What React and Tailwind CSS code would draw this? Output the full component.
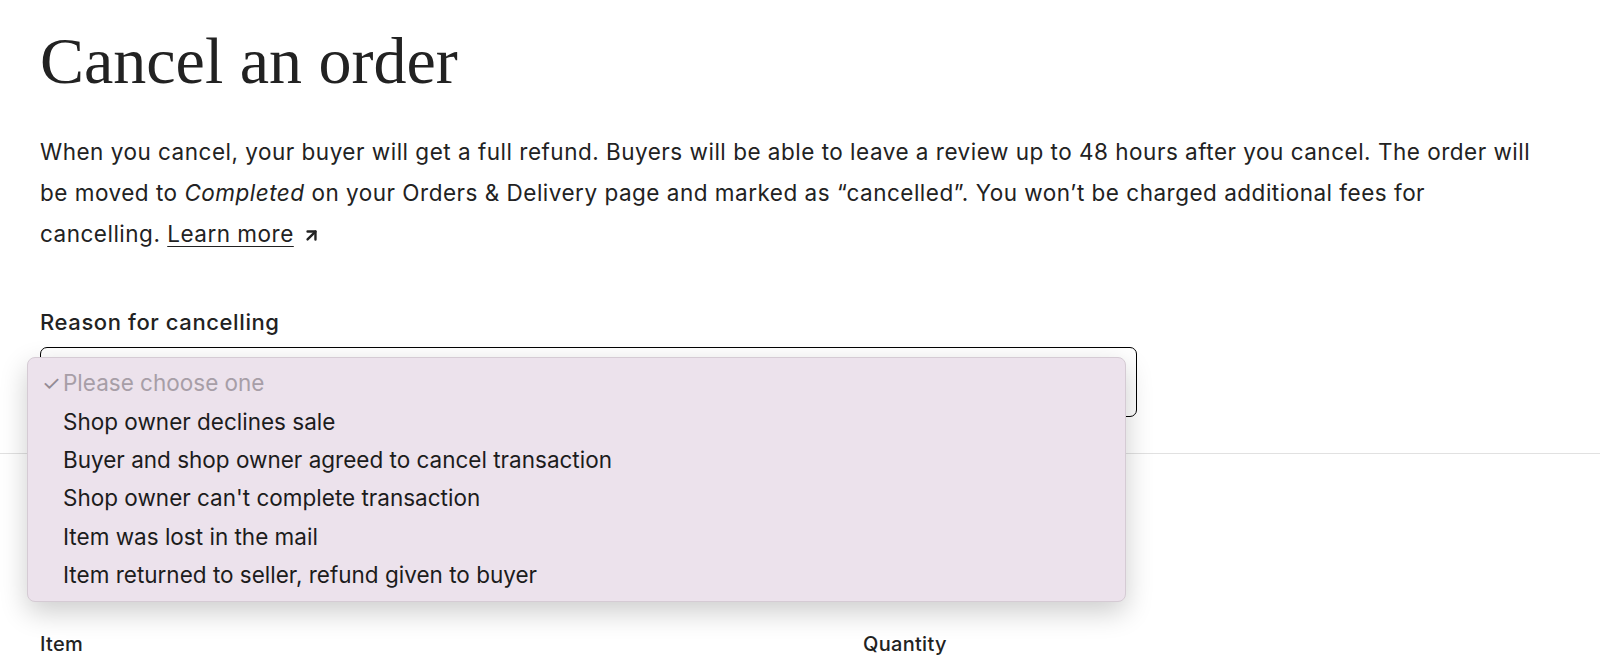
import { ArrowUpRight } from 'lucide-react';

const reasons = [
  'Shop owner declines sale',
  'Buyer and shop owner agreed to cancel transaction',
  "Shop owner can't complete transaction",
  'Item was lost in the mail',
  'Item returned to seller, refund given to buyer',
];

export default function App() {
  return (
    <div className="h-[671px] overflow-hidden bg-white text-[#222222] font-['Inter','Liberation_Sans',sans-serif]">
      <div className="px-10 pt-[28px]">
        <h1 className="font-['Liberation_Serif',serif] text-[66px] leading-none font-normal">
          Cancel an order
        </h1>

        <p className="mt-[37px] max-w-[1505px] text-[22.5px] leading-[41px] tracking-[0.5px]">
          When you cancel, your buyer will get a full refund. Buyers will be able to leave a review up to 48 hours after you cancel. The order will be moved to <em>Completed</em> on your Orders &amp; Delivery page and marked as “cancelled”. You won’t be charged additional fees for cancelling.{' '}
          <a href="#" className="underline underline-offset-4 decoration-1">Learn more</a>
          <ArrowUpRight className="ml-2 inline-block h-[19px] w-[19px] align-[-3px]" strokeWidth={3} />
        </p>

        <div className="mt-[54px]">
          <label className="block text-[22px] font-medium leading-[28px] tracking-[0.6px]">Reason for cancelling</label>
          <div className="relative mt-[11px] w-[1097px]">
            <div className="h-[70px] rounded-[7px] border border-black bg-white" />

            <div className="absolute left-[-13px] top-[10px] z-10 w-[1099px] rounded-[8px] border border-[#d5cbd4] bg-[#ece2ec] pt-[6px] pb-[7px] shadow-[0_10px_28px_rgba(0,0,0,0.2)]">
              <div className="flex h-[38.4px] items-center text-[22.5px] text-[#a79ea7]">
                <span className="w-[35px] pl-[14px] text-[21px] leading-none text-[#948b94]">✓</span>
                <span>Please choose one</span>
              </div>
              {reasons.map((r) => (
                <div key={r} className="flex h-[38.4px] items-center text-[22.5px] text-[#1c1c1c]">
                  <span className="w-[35px]" />
                  <span>{r}</span>
                </div>
              ))}
            </div>
          </div>
        </div>
      </div>

      <div className="mt-[36px] border-t border-[#e1e1e1]" />

      <div className="flex px-10 pt-[178px] text-[20px] font-medium leading-[24px] tracking-[0.3px]">
        <div className="w-[823px]">Item</div>
        <div>Quantity</div>
      </div>
    </div>
  );
}
